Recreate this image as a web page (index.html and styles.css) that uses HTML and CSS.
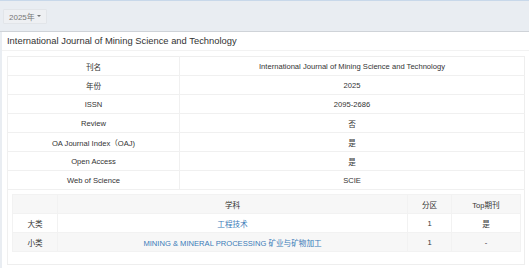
FILE: index.html
```html
<!DOCTYPE html>
<html>
<head>
<meta charset="utf-8">
<link rel="stylesheet" href="styles.css">
</head>
<body>
<div class="topbar">
  <button class="year-btn">2025年 <span class="caret"></span></button>
</div>
<div class="panel">
  <div class="panel-title">International Journal of Mining Science and Technology</div>
  <div class="panel-body">
    <table class="info">
      <tr><td class="key">刊名</td><td>International Journal of Mining Science and Technology</td></tr>
      <tr><td class="key">年份</td><td>2025</td></tr>
      <tr><td class="key">ISSN</td><td>2095-2686</td></tr>
      <tr><td class="key">Review</td><td>否</td></tr>
      <tr><td class="key">OA Journal Index（OAJ)</td><td>是</td></tr>
      <tr><td class="key">Open Access</td><td>是</td></tr>
      <tr><td class="key">Web of Science</td><td>SCIE</td></tr>
      <tr><td colspan="2" class="sub-wrap">
        <table class="subj">
          <tr class="head"><td class="c1"></td><td class="c2">学科</td><td class="c3">分区</td><td class="c4">Top期刊</td></tr>
          <tr><td>大类</td><td><a>工程技术</a></td><td>1</td><td>是</td></tr>
          <tr class="alt"><td>小类</td><td><a>MINING &amp; MINERAL PROCESSING 矿业与矿物加工</a></td><td>1</td><td>-</td></tr>
        </table>
      </td></tr>
    </table>
  </div>
</div>
</body>
</html>
```
FILE: styles.css
```css
html, body {
  margin: 0;
  padding: 0;
}
body {
  background: #e9edf2;
  border-top: 1px solid #c8d8ea;
  font-family: "Liberation Sans", Arial, "Noto Sans CJK SC", sans-serif;
  color: #333;
  height: 267px;
  overflow: hidden;
}
.topbar {
  height: 30px;
  display: flex;
  align-items: center;
  padding-left: 3px;
  border-bottom: 1px solid #cfd3d8;
}
.year-btn {
  height: 15px;
  padding: 0 5px;
  border: 1px solid #e2e5e9;
  background: #eef0f3;
  border-radius: 1px;
  font-family: inherit;
  font-size: 8px;
  color: #777;
  display: flex;
  align-items: center;
  gap: 2px;
}
.caret {
  width: 0;
  height: 0;
  border-left: 2px solid transparent;
  border-right: 2px solid transparent;
  border-top: 2px solid #777;
}
.panel {
  margin-left: 2px;
  background: #fff;
  height: 240px;
}
.panel-title {
  height: 18px;
  line-height: 18px;
  padding-left: 5px;
  font-size: 9.4px;
  color: #333;
  border-bottom: 1px solid #f2f2f2;
}
.panel-body {
  padding: 5px 4px 0 5px;
}
table {
  border-collapse: collapse;
  width: 100%;
}
.info {
  border: 1px solid #eeeeee;
}
.info td {
  height: 18px;
  padding: 0;
  text-align: center;
  font-size: 7.6px;
  border-bottom: 1px solid #f0f0f0;
  border-left: 1px solid #f0f0f0;
}
.info td.key {
  width: 171px;
}
.info td.sub-wrap {
  padding: 4px 3px 12px 4px;
  border-bottom: 1px solid #eee;
}
.subj td {
  height: 18px;
  padding: 0;
  text-align: center;
  font-size: 7.6px;
  border: 1px solid #f2f2f2;
}
.subj tr.head td, .subj tr.alt td {
  background: #f7f7f7;
}
.subj .c1 { width: 44px; }
.subj .c3 { width: 43px; }
.subj .c4 { width: 68px; }
.subj a {
  color: #3a7bb8;
  text-decoration: none;
}
```
